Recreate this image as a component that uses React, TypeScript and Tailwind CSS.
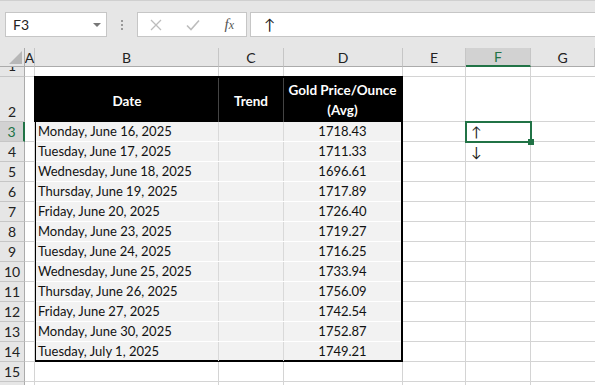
import React from "react";

const rows: [string, string][] = [
  ["Monday, June 16, 2025", "1718.43"],
  ["Tuesday, June 17, 2025", "1711.33"],
  ["Wednesday, June 18, 2025", "1696.61"],
  ["Thursday, June 19, 2025", "1717.89"],
  ["Friday, June 20, 2025", "1726.40"],
  ["Monday, June 23, 2025", "1719.27"],
  ["Tuesday, June 24, 2025", "1716.25"],
  ["Wednesday, June 25, 2025", "1733.94"],
  ["Thursday, June 26, 2025", "1756.09"],
  ["Friday, June 27, 2025", "1742.54"],
  ["Monday, June 30, 2025", "1752.87"],
  ["Tuesday, July 1, 2025", "1749.21"],
];

const cols = ["A", "B", "C", "D", "E", "F", "G"];

// cells in E, F, G for a given row number
const ExtraCells = ({ r }: { r: number }) => (
  <>
    <div className="border-r border-b border-[#d4d4d4]" />
    <div className="relative border-r border-b border-[#d4d4d4] flex items-center pl-[5px] text-[14px] text-[#222]">
      {r === 3 && "↑"}
      {r === 4 && "↓"}
      {r === 3 && (
        <div className="absolute z-10 -left-px -top-px w-[67px] h-[22px] border-2 border-[#217346]">
          <div className="absolute -right-[4px] -bottom-[4px] w-[6px] h-[6px] bg-[#217346]" />
        </div>
      )}
    </div>
    <div className="border-b border-[#d4d4d4]" />
  </>
);

const RowHead = ({ r, align = "center" }: { r: number; align?: string }) => {
  const sel = r === 3;
  return (
    <div
      className={`flex justify-center overflow-hidden border-b border-[#c6c6c6] text-[14px] leading-[18px] ${
        align === "bottom" ? "items-end" : "items-center"
      } ${
        sel
          ? "bg-[#d2d2d2] text-[#217346] border-r-2 border-r-[#217346]"
          : "bg-[#e6e6e6] text-[#222] border-r border-r-[#ababab]"
      }`}
    >
      {r}
    </div>
  );
};

export default function App() {
  return (
    <div
      className="w-[595px] h-[385px] overflow-hidden bg-white"
      style={{ fontFamily: "Lato, 'Noto Sans', sans-serif" }}
    >
      {/* formula bar */}
      <div className="h-[48px] bg-[#e6e6e6] border-t border-[#d0d0d0] pt-[11px] pl-[5px] flex items-start">
        <div className="w-[102px] h-[25px] bg-white border border-[#c6c6c6] flex items-center justify-between pl-[7px] pr-[5px] text-[14px] text-[#222]">
          <span>F3</span>
          <div className="w-0 h-0 border-l-[4px] border-r-[4px] border-t-[4px] border-l-transparent border-r-transparent border-t-[#777]" />
        </div>
        <div className="w-[30px] h-[25px] flex flex-col items-center justify-center gap-[2px]">
          <div className="w-[2px] h-[2px] bg-[#999]" />
          <div className="w-[2px] h-[2px] bg-[#999]" />
          <div className="w-[2px] h-[2px] bg-[#999]" />
        </div>
        <div className="w-[110px] h-[25px] bg-white border border-[#c6c6c6] flex items-center pl-[12px] pr-[12px] justify-between">
          <svg width="12" height="12" viewBox="0 0 12 12">
            <path d="M1 1L11 11M11 1L1 11" stroke="#bdbdbd" strokeWidth="1.3" />
          </svg>
          <svg width="14" height="12" viewBox="0 0 14 12">
            <path d="M1 6.5L5 10.5L13 1.5" stroke="#bdbdbd" strokeWidth="1.6" fill="none" />
          </svg>
          <span
            className="text-[15px] italic text-[#555] leading-none"
            style={{ fontFamily: "'Liberation Serif', serif" }}
          >
            f<span className="text-[12px]">x</span>
          </span>
        </div>
        <div className="ml-[3px] flex-1 h-[25px] bg-white border border-[#c6c6c6] border-r-0 flex items-center pl-[13px] text-[15px] text-[#222]">
          ↑
        </div>
      </div>

      {/* sheet grid */}
      <div className="grid grid-cols-[25px_10px_184px_65px_119px_63px_65px_64px] grid-rows-[19px_10px_45px_repeat(13,20px)_10px] text-[14px]">
        {/* column headers */}
        <div className="relative bg-[#e6e6e6] border-r border-b border-[#ababab]">
          <svg className="absolute right-[2px] bottom-[2px]" width="13" height="13" viewBox="0 0 13 13">
            <path d="M13 0V13H0Z" fill="#b7b7b7" />
          </svg>
        </div>
        {cols.map((c) => (
          <div
            key={c}
            className={`flex items-center justify-center ${
              c === "F"
                ? "bg-[#d2d2d2] text-[#217346] border-r border-r-[#c6c6c6] border-b-2 border-b-[#217346]"
                : "bg-[#e6e6e6] text-[#222] border-r border-r-[#c6c6c6] border-b border-b-[#ababab]"
            }`}
          >
            {c}
          </div>
        ))}

        {/* row 1 */}
        <div className="flex justify-center overflow-hidden bg-[#e6e6e6] border-r border-b border-r-[#ababab] border-b-[#c6c6c6] text-[14px] text-[#222] leading-[18px] items-start">
          <span className="-mt-[10px]">1</span>
        </div>
        <div className="border-r border-b border-[#d4d4d4]" />
        <div className="border-r border-b border-[#d4d4d4]" />
        <div className="border-r border-b border-[#d4d4d4]" />
        <div className="border-r border-b border-[#d4d4d4]" />
        <ExtraCells r={1} />

        {/* row 2 */}
        <RowHead r={2} align="bottom" />
        <div className="border-r border-[#d4d4d4]" />
        {/* table B2:D14 */}
        <div className="col-span-3 row-span-13 -ml-px -mt-px border-2 border-black flex flex-col text-[#111] bg-[#f2f2f2] text-[13px]">
          <div className="h-[44px] shrink-0 bg-black text-white font-bold text-[13.5px] flex">
            <div className="w-[183px] border-r border-[#444] flex items-center justify-center pt-[2px]">Date</div>
            <div className="w-[65px] border-r border-[#444] flex items-center justify-center pt-[2px]">Trend</div>
            <div className="flex-1 flex flex-col items-center justify-center leading-[20px]">
              <span>Gold Price/Ounce</span>
              <span>(Avg)</span>
            </div>
          </div>
          {rows.map(([d, p], i) => (
            <div
              key={d}
              className={`flex shrink-0 ${i === rows.length - 1 ? "h-[19px]" : "h-[20px] border-b border-white"}`}
            >
              <div className="w-[183px] border-r border-[#d9d9d9] flex items-center pl-[2px] whitespace-nowrap">{d}</div>
              <div className="w-[65px] border-r border-[#d9d9d9]" />
              <div className="flex-1 flex items-center justify-center">{p}</div>
            </div>
          ))}
        </div>
        <ExtraCells r={2} />

        {/* rows 3-14 */}
        {rows.map((_, i) => {
          const r = i + 3;
          return (
            <React.Fragment key={r}>
              <RowHead r={r} />
              <div className="border-r border-b border-[#d4d4d4]" />
              <ExtraCells r={r} />
            </React.Fragment>
          );
        })}

        {/* row 15 */}
        <RowHead r={15} />
        <div className="border-r border-b border-[#d4d4d4]" />
        <div className="border-r border-b border-[#d4d4d4]" />
        <div className="border-r border-b border-[#d4d4d4]" />
        <div className="border-r border-b border-[#d4d4d4]" />
        <ExtraCells r={15} />

        {/* row 16 (cut) */}
        <div className="bg-[#e6e6e6] border-r border-[#ababab]" />
        <div className="border-r border-[#d4d4d4]" />
        <div className="border-r border-[#d4d4d4]" />
        <div className="border-r border-[#d4d4d4]" />
        <div className="border-r border-[#d4d4d4]" />
        <div className="border-r border-[#d4d4d4]" />
        <div className="border-r border-[#d4d4d4]" />
        <div />
      </div>
    </div>
  );
}
